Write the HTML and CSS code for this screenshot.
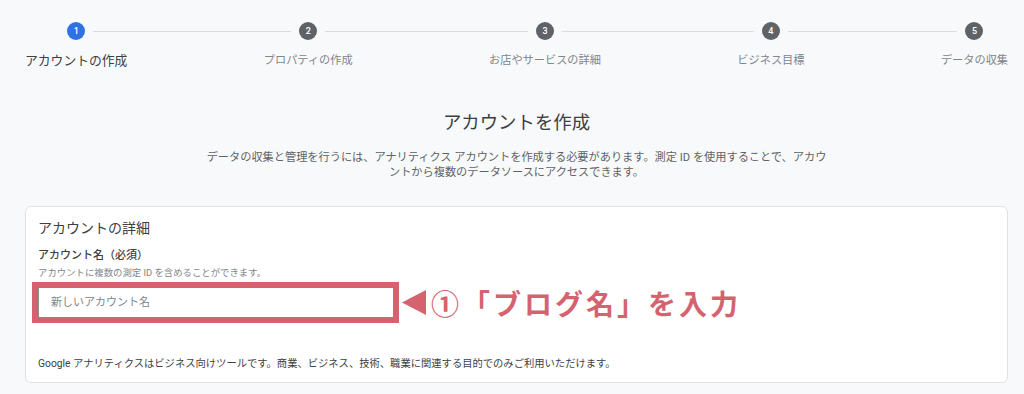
FILE: index.html
```html
<!DOCTYPE html>
<html lang="ja">
<head>
<meta charset="utf-8">
<title>アカウントを作成</title>
<link rel="stylesheet" href="styles.css">
</head>
<body>
<div class="page">
  <div class="stepper">
    <div class="step step-first step-active">
      <div class="dot-row"><span class="dot">1</span></div>
      <div class="step-label">アカウントの作成</div>
    </div>
    <div class="connector"></div>
    <div class="step">
      <div class="dot-row"><span class="dot">2</span></div>
      <div class="step-label">プロパティの作成</div>
    </div>
    <div class="connector"></div>
    <div class="step">
      <div class="dot-row"><span class="dot">3</span></div>
      <div class="step-label">お店やサービスの詳細</div>
    </div>
    <div class="connector"></div>
    <div class="step">
      <div class="dot-row"><span class="dot">4</span></div>
      <div class="step-label">ビジネス目標</div>
    </div>
    <div class="connector"></div>
    <div class="step step-last">
      <div class="dot-row"><span class="dot">5</span></div>
      <div class="step-label">データの収集</div>
    </div>
  </div>

  <h1 class="title">アカウントを作成</h1>
  <p class="lead">データの収集と管理を行うには、アナリティクス アカウントを作成する必要があります。測定 ID を使用することで、アカウ<br>ントから複数のデータソースにアクセスできます。</p>

  <section class="card">
    <h2 class="card-title">アカウントの詳細</h2>
    <div class="field-label">アカウント名（必須）</div>
    <div class="field-help">アカウントに複数の測定 ID を含めることができます。</div>
    <div class="annot-row">
      <div class="annot-frame">
        <div class="name-input">新しいアカウント名</div>
      </div>
      <svg class="annot-arrow" width="24" height="25" viewBox="0 0 24 25"><polygon points="0,12.5 24,0 24,25" fill="#d5636f"/></svg>
      <div class="annot-text">①「ブログ名」を入力</div>
    </div>
    <p class="card-foot">Google アナリティクスはビジネス向けツールです。商業、ビジネス、技術、職業に関連する目的でのみご利用いただけます。</p>
  </section>
</div>
</body>
</html>
```

FILE: styles.css
```css
* { box-sizing: border-box; }

html, body {
  margin: 0;
  padding: 0;
  background: #f8f9fa;
}

body {
  font-family: Roboto, "Noto Sans CJK JP", sans-serif;
  color: #3c4043;
}

.page {
  padding: 22px 16px 0 25px;
}

/* Stepper */
.stepper {
  display: flex;
  align-items: flex-start;
}

.step {
  display: flex;
  flex-direction: column;
  align-items: center;
}

.dot-row {
  display: flex;
  align-items: center;
  align-self: stretch;
  height: 18px;
}

.dot-row::before,
.dot-row::after {
  content: "";
  flex: 1;
  height: 1px;
  background: #dadce0;
}

.step-first .dot-row::before,
.step-last .dot-row::after {
  background: transparent;
}

.dot {
  width: 18px;
  height: 18px;
  margin: 0 8px;
  border-radius: 50%;
  background: #5f6368;
  color: #fff;
  font-size: 9px;
  font-weight: 500;
  line-height: 18px;
  text-align: center;
}

.step-active .dot {
  background: #2f72e4;
}

.step-label {
  margin-top: 13px;
  font-size: 11.2px;
  line-height: 16px;
  color: #80868b;
  white-space: nowrap;
}

.step-active .step-label {
  font-size: 12.8px;
  color: #3c4043;
  font-weight: 400;
}

.connector {
  flex: 1;
  height: 1px;
  margin-top: 9px;
  background: #dadce0;
}

/* Heading */
.title {
  margin: 42px 0 0;
  font-size: 18.4px;
  line-height: 24px;
  font-weight: 400;
  text-align: center;
  color: #3c4043;
}

.lead {
  max-width: 680px;
  margin: 16px auto 0;
  font-size: 11.2px;
  line-height: 14.5px;
  text-align: center;
  color: #5f6368;
}

/* Card */
.card {
  margin-top: 26px;
  padding: 11px 12px 10px;
  background: #fff;
  border: 1px solid #e0e2e5;
  border-radius: 6px;
}

.card-title {
  margin: 0;
  font-size: 14px;
  line-height: 20px;
  font-weight: 400;
  color: #3c4043;
}

.field-label {
  margin-top: 11px;
  font-size: 11px;
  line-height: 14px;
  font-weight: 500;
  color: #3c4043;
}

.field-help {
  margin-top: 4px;
  font-size: 9.4px;
  line-height: 12px;
  color: #80868b;
}

.annot-row {
  display: flex;
  align-items: center;
  margin-top: 3px;
  margin-left: -6px;
}

.annot-frame {
  width: 367px;
  border: 6px solid #d5636f;
}

.name-input {
  height: 29px;
  padding-left: 12px;
  border-left: 1px solid #8a8f94;
  font-size: 11px;
  line-height: 29px;
  color: #80868b;
}

.annot-arrow {
  display: block;
  margin-left: 3px;
}

.annot-text {
  margin-left: 5px;
  font-family: "Noto Sans CJK JP", sans-serif;
  font-size: 28px;
  line-height: 34px;
  font-weight: 700;
  letter-spacing: 3px;
  color: #d5636f;
}

.card-foot {
  margin: 33px 0 0;
  font-size: 10.3px;
  line-height: 16px;
  color: #3c4043;
}
```
